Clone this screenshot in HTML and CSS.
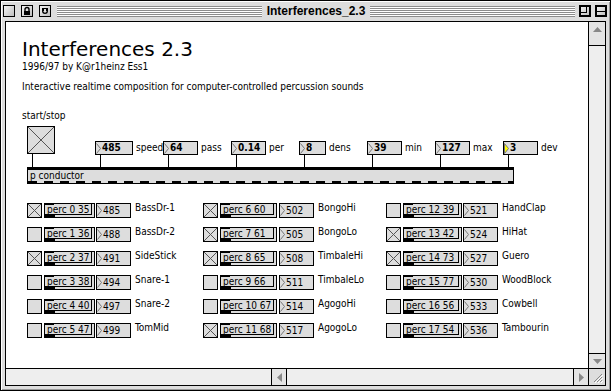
FILE: index.html
```html
<!DOCTYPE html>
<html lang="en">
<head>
    <meta charset="UTF-8">
    <title>Interferences_2.3</title>
    <link rel="stylesheet" href="styles.css">
</head>
<body>
    <div class="window">
        <div class="titlebar">
            <div class="tb-btn"></div>
            <div class="tb-btn">
                <svg width="10" height="10" viewBox="0 0 10 10"><path d="M3 5V3.5a2 2 0 0 1 4 0V5" fill="none" stroke="#000" stroke-width="1.4"/><rect x="2" y="5" width="6" height="4" fill="#000"/></svg>
            </div>
            <div class="tb-btn">
                <svg width="10" height="10" viewBox="0 0 10 10"><path d="M2 2h6v3a3 3 0 0 1-6 0z" fill="#000"/><path d="M4 3h2v2h1L5 7 3 5h1z" fill="#ddd"/></svg>
            </div>
            <div class="stripes left"></div>
            <div class="wintitle">Interferences_2.3</div>
            <div class="stripes right"></div>
            <div class="tb-btn">
                <svg width="10" height="10" viewBox="0 0 10 10"><rect x="0.5" y="0.5" width="9" height="9" fill="none" stroke="#000"/><rect x="0.5" y="0.5" width="6" height="6" fill="none" stroke="#000"/></svg>
            </div>
            <div class="tb-btn">
                <svg width="10" height="10" viewBox="0 0 10 10"><rect x="0.5" y="0.5" width="9" height="9" fill="none" stroke="#000"/><path d="M0 5.5h10" stroke="#000"/></svg>
            </div>
        </div>

        <div class="frame">
            <div class="patcher">
                <h1>Interferences 2.3</h1>
                <p class="byline">1996/97 by K@r1heinz Ess1</p>
                <p class="desc">Interactive realtime composition for computer-controlled percussion sounds</p>
                <p class="startstop">start/stop</p>

                <div class="controls">
                    <div class="unit toggle-unit">
                        <div class="big-toggle"></div>
                        <div class="cord"></div>
                    </div>
                    <div class="param">
                        <div class="unit">
                            <div class="num bold w38"><svg class="tri" width="5" height="11" viewBox="0 0 5 11"><path d="M0.5 0.5L4.5 5.5L0.5 10.5" fill="none" stroke="#777"/></svg>485</div>
                            <div class="cord"></div>
                        </div>
                        <span class="plabel">speed</span>
                    </div>
                    <div class="param">
                        <div class="unit">
                            <div class="num bold w35"><svg class="tri" width="5" height="11" viewBox="0 0 5 11"><path d="M0.5 0.5L4.5 5.5L0.5 10.5" fill="none" stroke="#777"/></svg>64</div>
                            <div class="cord"></div>
                        </div>
                        <span class="plabel">pass</span>
                    </div>
                    <div class="param">
                        <div class="unit">
                            <div class="num bold w35"><svg class="tri" width="5" height="11" viewBox="0 0 5 11"><path d="M0.5 0.5L4.5 5.5L0.5 10.5" fill="none" stroke="#777"/></svg>0.14</div>
                            <div class="cord"></div>
                        </div>
                        <span class="plabel">per</span>
                    </div>
                    <div class="param">
                        <div class="unit">
                            <div class="num bold w27"><svg class="tri" width="5" height="11" viewBox="0 0 5 11"><path d="M0.5 0.5L4.5 5.5L0.5 10.5" fill="none" stroke="#777"/></svg>8</div>
                            <div class="cord"></div>
                        </div>
                        <span class="plabel">dens</span>
                    </div>
                    <div class="param">
                        <div class="unit">
                            <div class="num bold w35"><svg class="tri" width="5" height="11" viewBox="0 0 5 11"><path d="M0.5 0.5L4.5 5.5L0.5 10.5" fill="none" stroke="#777"/></svg>39</div>
                            <div class="cord"></div>
                        </div>
                        <span class="plabel">min</span>
                    </div>
                    <div class="param">
                        <div class="unit">
                            <div class="num bold w35"><svg class="tri" width="5" height="11" viewBox="0 0 5 11"><path d="M0.5 0.5L4.5 5.5L0.5 10.5" fill="none" stroke="#777"/></svg>127</div>
                            <div class="cord"></div>
                        </div>
                        <span class="plabel">max</span>
                    </div>
                    <div class="param">
                        <div class="unit">
                            <div class="num bold w35"><svg class="tri" width="5" height="11" viewBox="0 0 5 11"><path d="M0.5 0.5L4.5 5.5L0.5 10.5z" fill="#ffff00" stroke="#777"/></svg>3</div>
                            <div class="cord"></div>
                        </div>
                        <span class="plabel">dev</span>
                    </div>
                </div>

                <div class="conductor">p conductor</div>

                <div class="voices">
                    <div class="col c1">
                        <div class="voice"><span class="tog on"></span><span class="perc"><span>perc 0 35</span></span><span class="num"><svg class="tri" width="5" height="11" viewBox="0 0 5 11"><path d="M0.5 0.5L4.5 5.5L0.5 10.5" fill="none" stroke="#777"/></svg>485</span><span class="vlabel">BassDr-1</span></div>
                        <div class="voice"><span class="tog"></span><span class="perc"><span>perc 1 36</span></span><span class="num"><svg class="tri" width="5" height="11" viewBox="0 0 5 11"><path d="M0.5 0.5L4.5 5.5L0.5 10.5" fill="none" stroke="#777"/></svg>488</span><span class="vlabel">BassDr-2</span></div>
                        <div class="voice"><span class="tog on"></span><span class="perc"><span>perc 2 37</span></span><span class="num"><svg class="tri" width="5" height="11" viewBox="0 0 5 11"><path d="M0.5 0.5L4.5 5.5L0.5 10.5" fill="none" stroke="#777"/></svg>491</span><span class="vlabel">SideStick</span></div>
                        <div class="voice"><span class="tog"></span><span class="perc"><span>perc 3 38</span></span><span class="num"><svg class="tri" width="5" height="11" viewBox="0 0 5 11"><path d="M0.5 0.5L4.5 5.5L0.5 10.5" fill="none" stroke="#777"/></svg>494</span><span class="vlabel">Snare-1</span></div>
                        <div class="voice"><span class="tog"></span><span class="perc"><span>perc 4 40</span></span><span class="num"><svg class="tri" width="5" height="11" viewBox="0 0 5 11"><path d="M0.5 0.5L4.5 5.5L0.5 10.5" fill="none" stroke="#777"/></svg>497</span><span class="vlabel">Snare-2</span></div>
                        <div class="voice"><span class="tog"></span><span class="perc"><span>perc 5 47</span></span><span class="num"><svg class="tri" width="5" height="11" viewBox="0 0 5 11"><path d="M0.5 0.5L4.5 5.5L0.5 10.5" fill="none" stroke="#777"/></svg>499</span><span class="vlabel">TomMid</span></div>
                    </div>
                    <div class="col c2">
                        <div class="voice"><span class="tog on"></span><span class="perc"><span>perc 6 60</span></span><span class="num"><svg class="tri" width="5" height="11" viewBox="0 0 5 11"><path d="M0.5 0.5L4.5 5.5L0.5 10.5" fill="none" stroke="#777"/></svg>502</span><span class="vlabel">BongoHi</span></div>
                        <div class="voice"><span class="tog on"></span><span class="perc"><span>perc 7 61</span></span><span class="num"><svg class="tri" width="5" height="11" viewBox="0 0 5 11"><path d="M0.5 0.5L4.5 5.5L0.5 10.5" fill="none" stroke="#777"/></svg>505</span><span class="vlabel">BongoLo</span></div>
                        <div class="voice"><span class="tog on"></span><span class="perc"><span>perc 8 65</span></span><span class="num"><svg class="tri" width="5" height="11" viewBox="0 0 5 11"><path d="M0.5 0.5L4.5 5.5L0.5 10.5" fill="none" stroke="#777"/></svg>508</span><span class="vlabel">TimbaleHi</span></div>
                        <div class="voice"><span class="tog"></span><span class="perc"><span>perc 9 66</span></span><span class="num"><svg class="tri" width="5" height="11" viewBox="0 0 5 11"><path d="M0.5 0.5L4.5 5.5L0.5 10.5" fill="none" stroke="#777"/></svg>511</span><span class="vlabel">TimbaleLo</span></div>
                        <div class="voice"><span class="tog"></span><span class="perc"><span>perc 10 67</span></span><span class="num"><svg class="tri" width="5" height="11" viewBox="0 0 5 11"><path d="M0.5 0.5L4.5 5.5L0.5 10.5" fill="none" stroke="#777"/></svg>514</span><span class="vlabel">AgogoHi</span></div>
                        <div class="voice"><span class="tog on"></span><span class="perc"><span>perc 11 68</span></span><span class="num"><svg class="tri" width="5" height="11" viewBox="0 0 5 11"><path d="M0.5 0.5L4.5 5.5L0.5 10.5" fill="none" stroke="#777"/></svg>517</span><span class="vlabel">AgogoLo</span></div>
                    </div>
                    <div class="col c3">
                        <div class="voice"><span class="tog"></span><span class="perc"><span>perc 12 39</span></span><span class="num"><svg class="tri" width="5" height="11" viewBox="0 0 5 11"><path d="M0.5 0.5L4.5 5.5L0.5 10.5" fill="none" stroke="#777"/></svg>521</span><span class="vlabel">HandClap</span></div>
                        <div class="voice"><span class="tog on"></span><span class="perc"><span>perc 13 42</span></span><span class="num"><svg class="tri" width="5" height="11" viewBox="0 0 5 11"><path d="M0.5 0.5L4.5 5.5L0.5 10.5" fill="none" stroke="#777"/></svg>524</span><span class="vlabel">HiHat</span></div>
                        <div class="voice"><span class="tog on"></span><span class="perc"><span>perc 14 73</span></span><span class="num"><svg class="tri" width="5" height="11" viewBox="0 0 5 11"><path d="M0.5 0.5L4.5 5.5L0.5 10.5" fill="none" stroke="#777"/></svg>527</span><span class="vlabel">Guero</span></div>
                        <div class="voice"><span class="tog"></span><span class="perc"><span>perc 15 77</span></span><span class="num"><svg class="tri" width="5" height="11" viewBox="0 0 5 11"><path d="M0.5 0.5L4.5 5.5L0.5 10.5" fill="none" stroke="#777"/></svg>530</span><span class="vlabel">WoodBlock</span></div>
                        <div class="voice"><span class="tog"></span><span class="perc"><span>perc 16 56</span></span><span class="num"><svg class="tri" width="5" height="11" viewBox="0 0 5 11"><path d="M0.5 0.5L4.5 5.5L0.5 10.5" fill="none" stroke="#777"/></svg>533</span><span class="vlabel">Cowbell</span></div>
                        <div class="voice"><span class="tog"></span><span class="perc"><span>perc 17 54</span></span><span class="num"><svg class="tri" width="5" height="11" viewBox="0 0 5 11"><path d="M0.5 0.5L4.5 5.5L0.5 10.5" fill="none" stroke="#777"/></svg>536</span><span class="vlabel">Tambourin</span></div>
                    </div>
                </div>
            </div>

            <div class="vscroll">
                <div class="arrow up"><svg width="9" height="5" viewBox="0 0 9 5"><path d="M4.5 0L9 5H0z" fill="#888"/></svg></div>
                <div class="track"></div>
                <div class="arrow down"><svg width="9" height="5" viewBox="0 0 9 5"><path d="M0 0H9L4.5 5z" fill="#888"/></svg></div>
            </div>

            <div class="hscroll">
                <div class="hblank"></div>
                <div class="harrow"><svg width="5" height="9" viewBox="0 0 5 9"><path d="M0 4.5L5 0V9z" fill="#888"/></svg></div>
                <div class="htrack"></div>
                <div class="harrow"><svg width="5" height="9" viewBox="0 0 5 9"><path d="M5 4.5L0 0V9z" fill="#888"/></svg></div>
            </div>

            <div class="grow">
                <svg width="14" height="14" viewBox="0 0 14 14"><path d="M4 12L12 4M7 12L12 7M10 12L12 10" stroke="#888" stroke-width="1"/><path d="M5 13L13 5M8 13L13 8M11 13L13 11" stroke="#fff" stroke-width="1"/></svg>
            </div>
        </div>
    </div>
</body>
</html>
```

FILE: styles.css
```css
body {
    margin: 0;
    background: #dddddd;
    font-family: "DejaVu Sans Condensed", "DejaVu Sans", sans-serif;
    font-stretch: condensed;
    font-size: 10px;
    color: #000;
}
.window {
    width: 611px;
    height: 391px;
    box-sizing: border-box;
    border: 1px solid #000;
    background: #dddddd;
    display: flex;
    flex-direction: column;
    box-shadow: inset 1px 1px 0 #fff, inset -1px -1px 0 #999;
}

/* title bar */
.titlebar {
    height: 20px;
    display: flex;
    align-items: center;
    padding: 0 3px 0 2px;
}
.tb-btn {
    width: 12px;
    height: 12px;
    box-sizing: border-box;
    border: 1px solid #000;
    background: linear-gradient(135deg, #f4f4f4, #bdbdbd);
    display: flex;
    align-items: center;
    justify-content: center;
    margin-right: 6px;
}
.tb-btn:nth-child(3) {
    margin-right: 4px;
}
.tb-btn:nth-last-child(2) {
    margin-right: 4px;
}
.tb-btn:last-child {
    margin-right: 0;
}
.tb-btn svg {
    display: block;
}
.stripes {
    flex: 1;
    height: 11px;
    background: repeating-linear-gradient(to bottom, #8c8c8c 0 1px, #ffffff 1px 2px);
}
.stripes.left {
    margin-left: 2px;
}
.stripes.right {
    margin-right: 4px;
}
.wintitle {
    font-family: "Liberation Sans", Arial, sans-serif;
    font-stretch: normal;
    font-weight: bold;
    font-size: 12px;
    padding: 0 5px;
}

/* window frame and scroll bars */
.frame {
    flex: 1;
    margin: 0 4px 4px 4px;
    border: 1px solid #000;
    background: #000;
    display: grid;
    grid-template-columns: 1fr 16px;
    grid-template-rows: 1fr 16px;
    gap: 1px;
}
.vscroll {
    background: #eeeeee;
    display: flex;
    flex-direction: column;
}
.arrow {
    height: 15px;
    display: flex;
    align-items: center;
    justify-content: center;
    background: #e4e4e4;
}
.arrow.up {
    height: 24px;
    align-items: flex-start;
    padding-top: 5px;
    box-sizing: border-box;
    border-bottom: 1px solid #000;
}
.arrow.down {
    height: 14px;
    border-top: 1px solid #000;
}
.track {
    flex: 1;
}
.hscroll {
    background: #eeeeee;
    display: flex;
}
.hblank {
    width: 265px;
    border-right: 1px solid #000;
}
.harrow {
    width: 14px;
    display: flex;
    align-items: center;
    justify-content: center;
    background: #e4e4e4;
}
.htrack {
    flex: 1;
    border-left: 1px solid #000;
    border-right: 1px solid #000;
}
.grow {
    background: #dddddd;
    display: flex;
    align-items: center;
    justify-content: center;
}

/* patcher */
.patcher {
    background: #fff;
    padding-left: 16px;
    overflow: hidden;
}
.patcher p {
    margin: 0;
    line-height: 12px;
}
h1 {
    font-family: "DejaVu Sans", sans-serif;
    font-stretch: normal;
    font-weight: normal;
    font-size: 20px;
    line-height: 22px;
    margin: 16px 0 0 0;
}
.patcher .byline {
    margin-top: 1px;
}
.patcher .desc {
    margin-top: 8px;
}
.patcher .startstop {
    margin-top: 17px;
}

.controls {
    display: flex;
    height: 41px;
    margin: 4px 0 0 5px;
}
.unit {
    display: flex;
    flex-direction: column;
}
.toggle-unit {
    width: 28px;
    margin-right: 40px;
}
.big-toggle {
    height: 28px;
    box-sizing: border-box;
    border: 1px solid #000;
    background:
        linear-gradient(to top right, transparent calc(50% - 0.7px), #555 50%, transparent calc(50% + 0.7px)),
        linear-gradient(to bottom right, transparent calc(50% - 0.7px), #555 50%, transparent calc(50% + 0.7px)),
        #dddddd;
}
.cord {
    flex: 1;
    width: 1px;
    margin-left: 5px;
    background: #000;
}
.param {
    width: 68px;
    height: 41px;
    box-sizing: border-box;
    padding-top: 15px;
    display: flex;
    align-items: flex-start;
}
.param .unit {
    align-self: stretch;
}
.plabel {
    margin: 1px 0 0 3px;
    line-height: 12px;
}
.num {
    height: 14px;
    box-sizing: border-box;
    border: 1px solid #000;
    background: #dddddd;
    display: flex;
    align-items: center;
    line-height: 12px;
}
.num .tri {
    margin: 0 1px 0 0;
    flex: none;
}
.num.bold {
    font-weight: bold;
}
.w38 { width: 38px; }
.w35 { width: 35px; }
.w27 { width: 27px; }

.conductor {
    width: 487px;
    height: 17px;
    box-sizing: border-box;
    margin-left: 5px;
    border: 1px solid #000;
    border-top-width: 3px;
    background:
        repeating-linear-gradient(to right, #000 0 9px, transparent 9px 16px) left bottom / 100% 2px no-repeat,
        #dddddd;
    padding: 0 2px;
    line-height: 11px;
}

/* voice rows */
.voices {
    display: flex;
    margin: 19px 0 0 5px;
}
.col {
    display: flex;
    flex-direction: column;
    gap: 9px;
}
.c1 { width: 176px; }
.c2 { width: 183px; }
.voice {
    display: flex;
    height: 15px;
}
.tog {
    width: 15px;
    height: 15px;
    box-sizing: border-box;
    border: 1px solid #000;
    background: #dddddd;
    margin-right: 2px;
}
.tog.on {
    background:
        linear-gradient(to top right, transparent calc(50% - 0.7px), #555 50%, transparent calc(50% + 0.7px)),
        linear-gradient(to bottom right, transparent calc(50% - 0.7px), #555 50%, transparent calc(50% + 0.7px)),
        #dddddd;
}
.perc {
    display: flex;
    height: 15px;
    box-sizing: border-box;
    border: 1px solid #000;
    padding: 0 2px 2px 0;
    background:
        linear-gradient(#000, #000) left top / 10px 2px no-repeat,
        linear-gradient(#000, #000) left bottom / 11px 3px no-repeat,
        #dddddd;
    background-origin: border-box;
    margin-right: 1px;
}
.perc span {
    flex: 1;
    border-right: 1px solid #000;
    border-bottom: 1px solid #000;
    padding-left: 2px;
    line-height: 11px;
    white-space: nowrap;
}
.c1 .perc { width: 51px; }
.c2 .perc { width: 57px; margin-right: 2px; }
.c3 .perc { width: 59px; }
.voice .num {
    width: 35px;
    height: 15px;
}
.vlabel {
    margin: -1px 0 0 4px;
    line-height: 12px;
}
```
